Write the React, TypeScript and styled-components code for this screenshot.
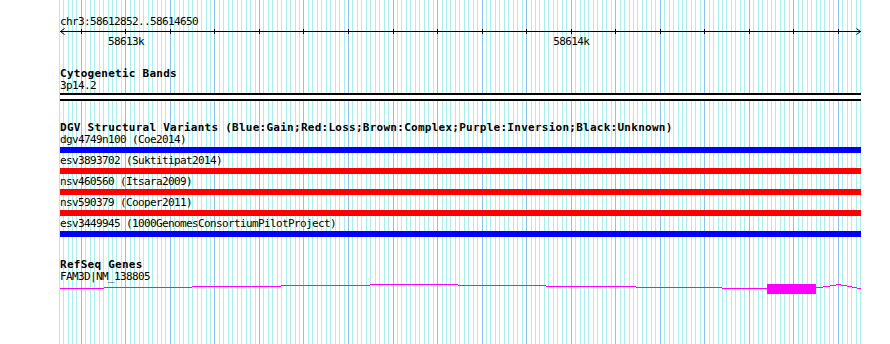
import React from 'react';
import styled, { createGlobalStyle } from 'styled-components';

const START = 58612852;
const END = 58614650;
const X0 = 60;
const TRACK_WIDTH = 801;
const SCALE = TRACK_WIDTH / (END - START + 1);

const bpToX = (bp: number) => X0 + (bp - START) * SCALE;

const GlobalStyle = createGlobalStyle`
  html, body {
    margin: 0;
    padding: 0;
    background: #fff;
  }
  body {
    font-family: "DejaVu Sans Mono", "Liberation Mono", monospace;
    color: #000;
  }
`;

const Page = styled.div`
  position: relative;
  width: 890px;
  height: 344px;
  overflow: hidden;
  background: #fff;
`;

const GridLayer = styled.svg`
  position: absolute;
  left: 0;
  top: 0;
  z-index: 0;
`;

const Content = styled.div`
  position: relative;
  z-index: 1;
  display: flex;
  flex-direction: column;
  width: ${TRACK_WIDTH}px;
  padding-left: ${X0}px;
`;

const Location = styled.div`
  margin-top: 16px;
  height: 12px;
  font-size: 11px;
  line-height: 12px;
  letter-spacing: -0.62px;
  white-space: pre;
`;

const Ruler = styled.svg`
  display: block;
  overflow: visible;
`;

const Track = styled.section<{ $gap: number }>`
  display: flex;
  flex-direction: column;
  margin-top: ${p => p.$gap}px;
`;

const TrackTitle = styled.div`
  height: 12px;
  font-size: 11px;
  line-height: 12px;
  font-weight: bold;
  letter-spacing: 0.26px;
  white-space: pre;
`;

const FeatureLabel = styled.div`
  height: 12px;
  font-size: 11px;
  line-height: 12px;
  letter-spacing: -0.62px;
  white-space: pre;
`;

const FeatureBar = styled.div<{ $color: string }>`
  height: 6px;
  margin: 1px 0 2px;
  background: ${p => p.$color};
`;

const CytoBand = styled.div`
  height: 4px;
  margin-top: 1px;
  border-top: 2px solid #000;
  border-bottom: 2px solid #000;
  background: #fff;
`;

const GeneGlyph = styled.svg`
  display: block;
  overflow: visible;
`;

const variants = [
  { id: 'dgv4749n100', study: 'Coe2014', color: '#0000ff' },
  { id: 'esv3893702', study: 'Suktitipat2014', color: '#ff0000' },
  { id: 'nsv460560', study: 'Itsara2009', color: '#ff0000' },
  { id: 'nsv590379', study: 'Cooper2011', color: '#ff0000' },
  { id: 'esv3449945', study: '1000GenomesConsortiumPilotProject', color: '#0000ff' },
];

// intron "hat" drawn in pixel rows: [x1, x2, y]
const geneSegments: [number, number, number][] = [
  [60, 104, 288], [104, 192, 287], [192, 281, 286], [281, 370, 285],
  [370, 458, 284], [458, 546, 285], [546, 636, 286], [636, 722, 287],
  [722, 767, 288],
  [816, 823, 287], [823, 830, 286], [830, 836, 285], [836, 841, 284],
  [841, 847, 285], [847, 852, 286], [852, 857, 287], [857, 861, 288],
];

function Grid() {
  const lines = [];
  for (let bp = 58612850; bp <= 58614650; bp += 10) {
    const major = bp % 100 === 0;
    lines.push(
      <rect
        key={bp}
        x={Math.floor(bpToX(bp))}
        y={0}
        width={1}
        height={344}
        fill={major ? '#8ec2ee' : '#aaeeee'}
      />
    );
  }
  return (
    <GridLayer width={890} height={344} shapeRendering="crispEdges">
      {lines}
    </GridLayer>
  );
}

function Scale() {
  const ticks = [];
  for (let bp = 58612900; bp <= 58614600; bp += 100) ticks.push(bp);
  const labels = [58613000, 58614000];
  return (
    <Ruler width={TRACK_WIDTH} height={20}>
      <g shapeRendering="crispEdges">
        <rect x={0} y={3} width={TRACK_WIDTH} height={1} fill="#000" />
        {ticks.map(bp => (
          <rect key={bp} x={Math.floor(bpToX(bp)) - X0} y={1} width={1} height={5} fill="#000" />
        ))}
      </g>
      <polyline points="4.5,0.5 0.5,3.5 4.5,6.5" fill="none" stroke="#000" strokeWidth={1} />
      <polyline points={`${TRACK_WIDTH - 4.5},0.5 ${TRACK_WIDTH - 0.5},3.5 ${TRACK_WIDTH - 4.5},6.5`} fill="none" stroke="#000" strokeWidth={1} />
      {labels.map(bp => (
        <text
          key={bp}
          x={bpToX(bp) - X0}
          y={16.5}
          textAnchor="middle"
          fontSize={11}
          letterSpacing={-0.62}
          fontFamily='"DejaVu Sans Mono", monospace'
          fill="#000"
        >
          {`${bp / 1000}k`}
        </text>
      ))}
    </Ruler>
  );
}

function Gene() {
  const top = 283;
  return (
    <GeneGlyph width={TRACK_WIDTH} height={12} shapeRendering="crispEdges">
      {geneSegments.map(([x1, x2, y]) => (
        <rect key={`${x1}-${y}`} x={x1 - X0} y={y - top} width={x2 - x1} height={1} fill="#ff00ff" />
      ))}
      <rect x={767 - X0} y={284 - top} width={49} height={10} fill="#ff00ff" />
    </GeneGlyph>
  );
}

export default function App() {
  return (
    <>
      <GlobalStyle />
      <Page>
        <Grid />
        <Content>
          <Location>chr3:58612852..58614650</Location>
          <Scale />

          <Track $gap={20}>
            <TrackTitle>Cytogenetic Bands</TrackTitle>
            <FeatureLabel>3p14.2</FeatureLabel>
            <CytoBand />
          </Track>

          <Track $gap={21}>
            <TrackTitle>DGV Structural Variants (Blue:Gain;Red:Loss;Brown:Complex;Purple:Inversion;Black:Unknown)</TrackTitle>
            {variants.map(v => (
              <React.Fragment key={v.id}>
                <FeatureLabel>{`${v.id} (${v.study})`}</FeatureLabel>
                <FeatureBar $color={v.color} />
              </React.Fragment>
            ))}
          </Track>

          <Track $gap={20}>
            <TrackTitle>RefSeq Genes</TrackTitle>
            <FeatureLabel>FAM3D|NM_138805</FeatureLabel>
            <Gene />
          </Track>
        </Content>
      </Page>
    </>
  );
}
